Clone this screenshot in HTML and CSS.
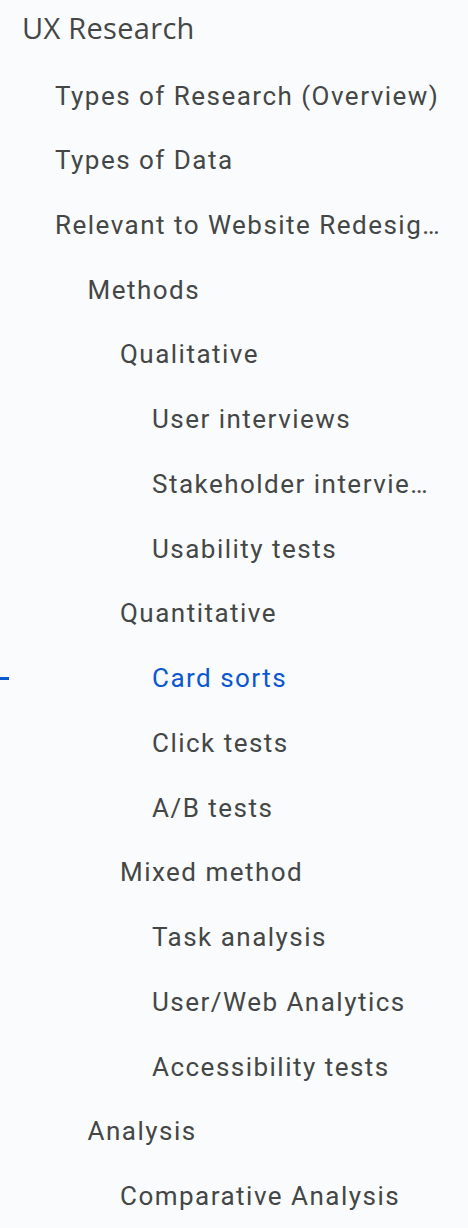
FILE: index.html
```html
<!DOCTYPE html>
<html>
<head>
<meta charset="utf-8">
<link rel="stylesheet" href="styles.css">
</head>
<body>
<nav class="outline">
  <div class="title">UX Research</div>
  <ul class="items">
    <li class="item l1">Types of Research (Overview)</li>
    <li class="item l1">Types of Data</li>
    <li class="item l1">Relevant to Website Redesign Project</li>
    <li class="item l2">Methods</li>
    <li class="item l3">Qualitative</li>
    <li class="item l4">User interviews</li>
    <li class="item l4">Stakeholder interviews</li>
    <li class="item l4">Usability tests</li>
    <li class="item l3">Quantitative</li>
    <li class="item l4 active"><span class="marker"></span>Card sorts</li>
    <li class="item l4">Click tests</li>
    <li class="item l4">A/B tests</li>
    <li class="item l3">Mixed method</li>
    <li class="item l4">Task analysis</li>
    <li class="item l4">User/Web Analytics</li>
    <li class="item l4">Accessibility tests</li>
    <li class="item l2">Analysis</li>
    <li class="item l3">Comparative Analysis</li>
  </ul>
</nav>
</body>
</html>
```

FILE: styles.css
```css
html, body {
  margin: 0;
  padding: 0;
  background: #f9fbfd;
}
.outline {
  width: 468px;
  height: 1228px;
  overflow: hidden;
  background: #f9fbfd;
  color: #444746;
  font-family: Roboto, "Noto Sans", sans-serif;
}
.title {
  height: 56px;
  line-height: 56px;
  padding-left: 22px;
  font-family: "Open Sans", Roboto, sans-serif;
  font-weight: 500;
  font-size: 29px;
  letter-spacing: 0.3px;
  color: #444746;
}
.items {
  list-style: none;
  margin: 0;
  padding: 7.5px 0 0 0;
}
.item {
  position: relative;
  height: 64.74px;
  line-height: 64.74px;
  font-size: 26px;
  letter-spacing: 1.48px;
  white-space: nowrap;
  overflow: hidden;
  text-overflow: ellipsis;
  padding-right: 22px;
}
.l1 { padding-left: 55px; }
.l2 { padding-left: 87.5px; }
.l3 { padding-left: 120px; }
.l4 { padding-left: 152px; }
.active { color: #0b57d0; }
.marker {
  position: absolute;
  left: 0;
  top: 30.5px;
  width: 9px;
  height: 3px;
  background: #0b57d0;
}
```
